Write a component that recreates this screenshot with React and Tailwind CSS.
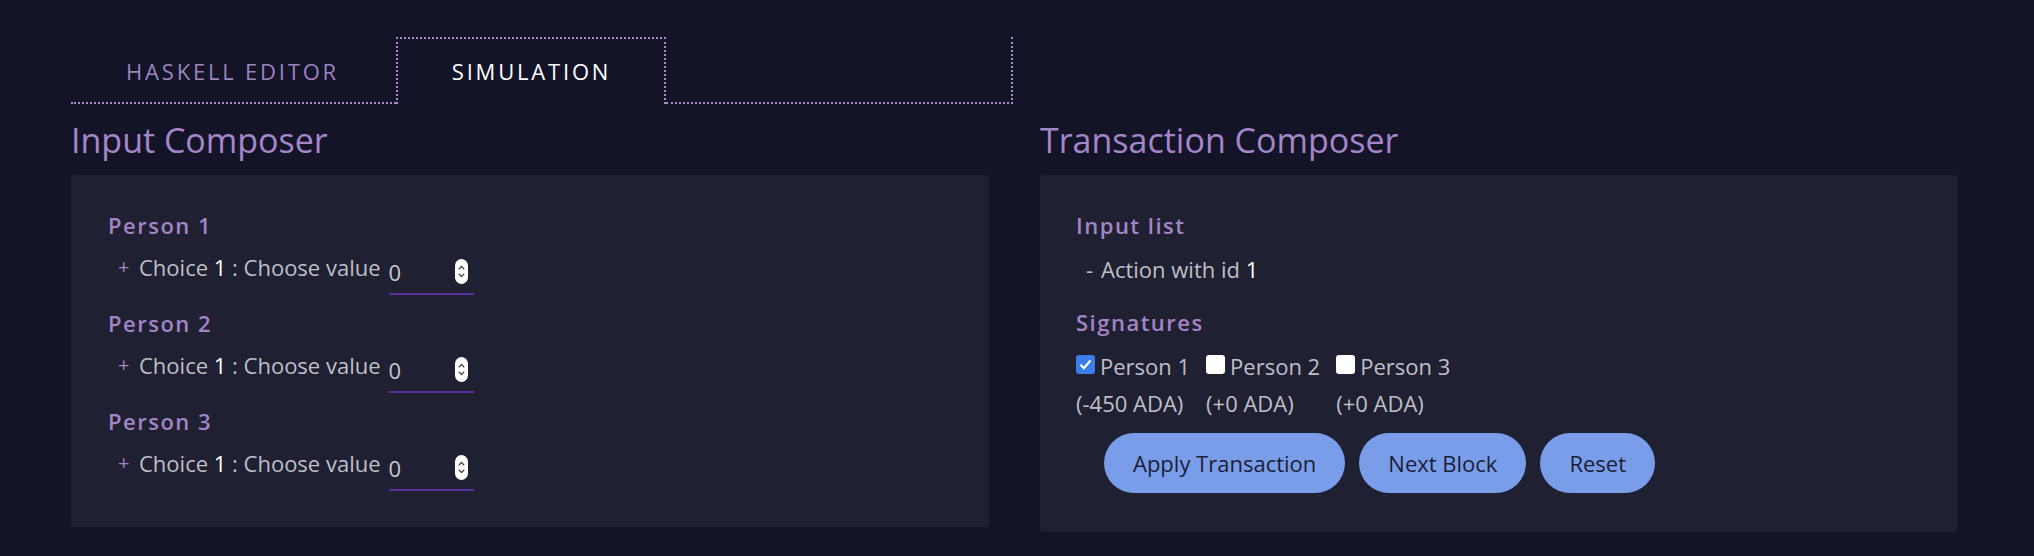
import React from 'react';

const persons = ['Person 1', 'Person 2', 'Person 3'];

function Spinner() {
  return (
    <svg width="13" height="25" viewBox="0 0 13 25" className="mr-[6px]">
      <rect x="0" y="0" width="13" height="25" rx="6.5" fill="#ffffff" />
      <path d="M3.8 10.2 L6.5 7.5 L9.2 10.2" fill="none" stroke="#4a4a4a" strokeWidth="1.3" />
      <path d="M3.8 14.8 L6.5 17.5 L9.2 14.8" fill="none" stroke="#4a4a4a" strokeWidth="1.3" />
    </svg>
  );
}

function Checkbox({ checked }) {
  if (checked) {
    return (
      <svg width="19" height="19" viewBox="0 0 19 19" className="mt-[3px] shrink-0">
        <rect x="0" y="0" width="19" height="19" rx="3" fill="#3b7de9" />
        <path d="M4.5 9.8 L7.8 13.2 L14.5 5.5" fill="none" stroke="#ffffff" strokeWidth="2.2" />
      </svg>
    );
  }
  return <span className="mt-[3px] h-[19px] w-[19px] shrink-0 rounded-[3px] bg-white" />;
}

function Label({ children }) {
  return (
    <div className="h-[30px] text-[22px] font-semibold leading-[30px] tracking-[1.5px] text-[#a384c6]">
      {children}
    </div>
  );
}

function ChoiceGroup({ name, last }) {
  return (
    <div className={last ? '' : 'mb-[13px]'}>
      <Label>{name}</Label>
      <div className="mt-[10px] flex items-start">
        <span className="ml-[10px] mt-[3px] w-[21px] text-[20px] leading-[28px] text-[#a384c6]">+</span>
        <span className="mt-[3px] text-[22px] leading-[28px] text-[#bfbfc8]">
          Choice <span className="text-white">1</span> : Choose value
        </span>
        <div className="ml-[8px] flex h-[45px] w-[85px] items-center justify-between border-b-2 border-[#5b2d9e]">
          <span className="text-[22px] leading-[28px] text-[#c8c8d0]">0</span>
          <Spinner />
        </div>
      </div>
    </div>
  );
}

function InputComposer() {
  return (
    <div className="w-[918px]">
      <h2 className="mb-[13px] h-[44px] text-[34px] leading-[44px] text-[#a586c8]">Input Composer</h2>
      <div className="rounded-[4px] bg-[#1f2031] px-[37px] pb-[36px] pt-[35px]">
        {persons.map((p, i) => (
          <ChoiceGroup key={p} name={p} last={i === persons.length - 1} />
        ))}
      </div>
    </div>
  );
}

function TransactionComposer() {
  const sigs = [
    { name: 'Person 1', amount: '(-450 ADA)', checked: true },
    { name: 'Person 2', amount: '(+0 ADA)', checked: false },
    { name: 'Person 3', amount: '(+0 ADA)', checked: false },
  ];

  return (
    <div className="w-[918px]">
      <h2 className="mb-[13px] h-[44px] text-[34px] leading-[44px] text-[#a586c8]">Transaction Composer</h2>
      <div className="rounded-[4px] bg-[#1f2031] pb-[39px] pl-[36px] pr-[37px] pt-[35px]">
        <Label>Input list</Label>
        <div className="mt-[15px] flex text-[22px] leading-[28px] text-[#bfbfc8]">
          <span className="ml-[10px] w-[15px]">-</span>
          <span>
            Action with id <span className="text-white">1</span>
          </span>
        </div>

        <div className="mt-[24px]">
          <Label>Signatures</Label>
        </div>

        {/* Signatures */}
        <div className="mt-[15px] flex gap-[16px] text-[22px] leading-[28px] text-[#bfbfc8]">
          {sigs.map((s) => (
            <div key={s.name} className="flex flex-col">
              <div className="flex items-start gap-[5px]">
                <Checkbox checked={s.checked} />
                <span>{s.name}</span>
              </div>
              <div className="mt-[9px]">{s.amount}</div>
            </div>
          ))}
        </div>

        <div className="ml-[28px] mt-[16px] flex gap-[14px]">
          <button className="h-[60px] rounded-full bg-[#7a9de9] px-[29px] text-[22px] text-[#1b1e36]">
            Apply Transaction
          </button>
          <button className="h-[60px] rounded-full bg-[#7a9de9] px-[29px] text-[22px] text-[#1b1e36]">
            Next Block
          </button>
          <button className="h-[60px] rounded-full bg-[#7a9de9] px-[29px] text-[22px] text-[#1b1e36]">
            Reset
          </button>
        </div>
      </div>
    </div>
  );
}

export default function App() {
  return (
    <div className="min-h-screen bg-[#131427] font-['Open_Sans',sans-serif]">
      <div className="pl-[71px] pr-[76px] pt-[37px]">
        {/* Tabs */}
        <div className="flex h-[67px]">
          <div className="flex w-[325px] items-center justify-center border-b-2 border-dotted border-[#a78bcf] pr-[2px] pt-[3px] text-[22px] tracking-[2.8px] text-[#9d83bf]">
            HASKELL EDITOR
          </div>
          <div className="flex w-[270px] items-center justify-center border-2 border-b-0 border-dotted border-[#a78bcf] pl-[1px] text-[22px] tracking-[2.8px] text-white">
            SIMULATION
          </div>
          <div className="w-[347px] border-b-2 border-r-2 border-dotted border-[#a78bcf]" />
        </div>

        <div className="mt-[14px] flex items-start gap-[51px]">
          <InputComposer />
          <TransactionComposer />
        </div>
      </div>
    </div>
  );
}
